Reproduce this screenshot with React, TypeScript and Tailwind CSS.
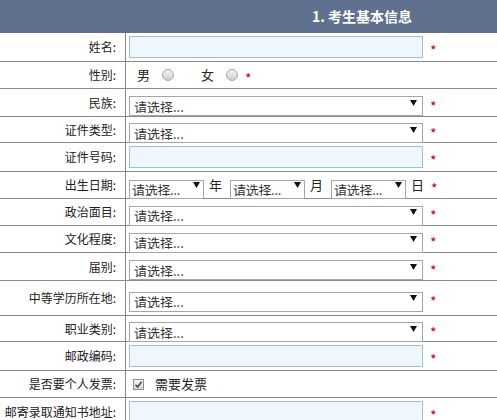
import React from "react";

const font = { fontFamily: '"Noto Sans CJK SC", "Noto Sans", sans-serif' };

function Star() {
  return (
    <span className="ml-[7px] translate-y-[3px] text-[14px] leading-none text-[#cc0000]">*</span>
  );
}

function TextInput() {
  return (
    <input
      type="text"
      className="h-[22px] w-[294px] border border-[#a3bfcd] bg-[#eef7fd] px-1 text-[13px] outline-none"
    />
  );
}

function Select({ w = "w-[294px]", h = "h-[20px]", small = false }: { w?: string; h?: string; small?: boolean }) {
  return (
    <div className={`relative ${w} ${h}`}>
      <select
        className={`h-full w-full appearance-none border border-[#a6a6a6] bg-white text-[13px] leading-none text-[#333] outline-none ${
          small ? "pl-[2px] tracking-[-0.3px]" : "pl-[4px]"
        }`}
      >
        <option>请选择...</option>
      </select>
      <svg
        className={`pointer-events-none absolute top-1/2 -translate-y-1/2 ${small ? "right-[4px]" : "right-[6px]"}`}
        width="7"
        height="6"
        viewBox="0 0 7 6"
      >
        <path d="M0 0H7L3.5 6Z" fill="#111" />
      </svg>
    </div>
  );
}

function Radio() {
  return (
    <span className="inline-block h-[12px] w-[12px] rounded-full border border-[#a8a8a8] bg-linear-to-b from-[#f2f2f2] to-[#cfcfcf]" />
  );
}

function Row({
  label,
  h,
  children,
}: {
  label: string;
  h: string;
  children: React.ReactNode;
}) {
  return (
    <div className={`flex ${h} border-b border-[#8a8a8a]`}>
      <div className="flex w-[126px] shrink-0 items-center justify-end border-r border-[#8a8a8a] pr-[9px] text-[12px] text-[#222]">
        {label}:
      </div>
      <div className="flex flex-1 items-center pl-[3px]">{children}</div>
    </div>
  );
}

export default function App() {
  return (
    <div className="w-[497px] bg-white" style={font}>
      <div className="flex h-[33px] items-center bg-[#60708f] pl-[312px] text-[14px] font-bold text-white">
        1. 考生基本信息
      </div>

      <Row label="姓名" h="h-[29px]">
        <TextInput />
        <Star />
      </Row>

      <Row label="性别" h="h-[27px]">
        <span className="ml-[8px] text-[13px] text-[#222]">男</span>
        <span className="ml-[12px] flex items-center">
          <Radio />
        </span>
        <span className="ml-[27px] text-[13px] text-[#222]">女</span>
        <span className="ml-[12px] flex items-center">
          <Radio />
        </span>
        <Star />
      </Row>

      <Row label="民族" h="h-[28px]">
        <Select />
        <Star />
      </Row>

      <Row label="证件类型" h="h-[26px]">
        <Select />
        <Star />
      </Row>

      <Row label="证件号码" h="h-[29px]">
        <TextInput />
        <Star />
      </Row>

      <Row label="出生日期" h="h-[27px]">
        <Select w="w-[75px]" h="h-[19px]" small />
        <span className="ml-[5px] mr-[8px] text-[13px] text-[#222]">年</span>
        <Select w="w-[75px]" h="h-[19px]" small />
        <span className="ml-[5px] mr-[8px] text-[13px] text-[#222]">月</span>
        <Select w="w-[75px]" h="h-[19px]" small />
        <span className="ml-[5px] text-[13px] text-[#222]">日</span>
        <Star />
      </Row>

      <Row label="政治面目" h="h-[27px]">
        <Select />
        <Star />
      </Row>

      <Row label="文化程度" h="h-[27px]">
        <Select />
        <Star />
      </Row>

      <Row label="届别" h="h-[28px]">
        <Select />
        <Star />
      </Row>

      <Row label="中等学历所在地" h="h-[35px]">
        <Select />
        <Star />
      </Row>

      <Row label="职业类别" h="h-[26px]">
        <Select />
        <Star />
      </Row>

      <Row label="邮政编码" h="h-[29px]">
        <TextInput />
        <Star />
      </Row>

      <Row label="是否要个人发票" h="h-[27px]">
        <span className="ml-[4px] flex h-[11px] w-[11px] items-center justify-center border border-[#8f8f8f] bg-linear-to-b from-[#f4f4f4] to-[#d6d6d6]">
          <svg width="9" height="9" viewBox="0 0 9 9">
            <path d="M1.5 4.8L3.6 7L7.6 1.8" stroke="#4a4a4a" strokeWidth="1.6" fill="none" />
          </svg>
        </span>
        <span className="ml-[11px] text-[13px] text-[#222]">需要发票</span>
      </Row>

      <Row label="邮寄录取通知书地址" h="h-[29px]">
        <TextInput />
        <Star />
      </Row>
    </div>
  );
}
